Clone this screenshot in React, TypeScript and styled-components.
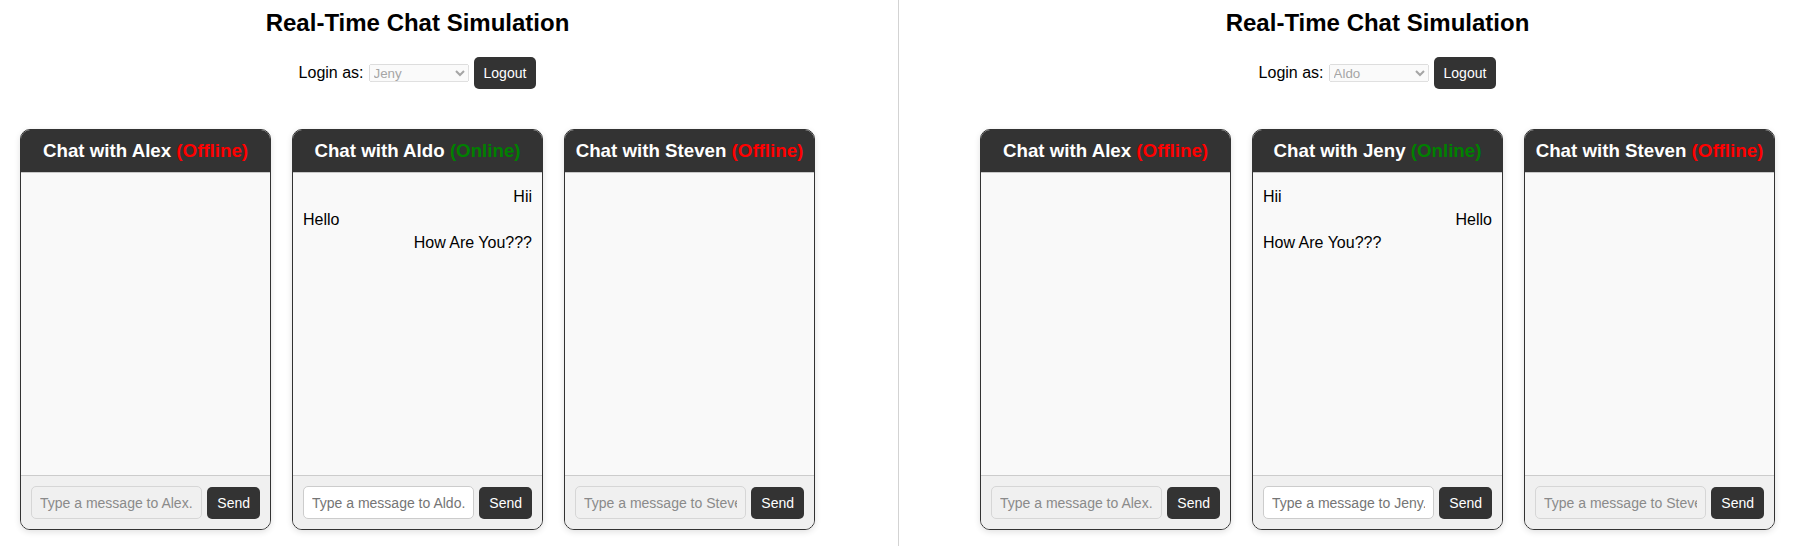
import React from "react";
import styled, { createGlobalStyle } from "styled-components";

const GlobalStyle = createGlobalStyle`
  html, body { margin: 0; padding: 0; background: #ffffff; }
  body { font-family: Arial, "Liberation Sans", sans-serif; color: #000; }
`;

const Page = styled.div`
  display: flex;
  height: 546px;
  width: 1795px;
`;

const Pane = styled.section<{ $side: "left" | "right" }>`
  box-sizing: border-box;
  height: 100%;
  padding-top: 9px;
  ${(p) =>
    p.$side === "left"
      ? `width: 899px; padding-right: 63px; border-right: 1px solid #d3d3d3;`
      : `flex: 1; padding-left: 61px;`}
  display: flex;
  flex-direction: column;
  align-items: stretch;
`;

const Title = styled.h2`
  margin: 0;
  font-size: 24px;
  font-weight: bold;
  text-align: center;
  line-height: normal;
`;

const LoginRow = styled.div`
  margin-top: 20px;
  display: flex;
  justify-content: center;
  align-items: center;
  gap: 5px;
  font-size: 16px;
`;

const UserSelect = styled.select`
  width: 100px;
  height: 18px;
  font-family: Arial, "Liberation Sans", sans-serif;
  font-size: 13.33px;
`;

const DarkButton = styled.button`
  background: #333333;
  color: #ffffff;
  border: none;
  border-radius: 5px;
  padding: 8px 10px;
  font-family: Arial, "Liberation Sans", sans-serif;
  font-size: 14px;
  line-height: 16px;
  cursor: pointer;
  white-space: nowrap;
`;

const CardRow = styled.div`
  margin-top: 40px;
  display: flex;
  justify-content: center;
  gap: 21px;
`;

const Card = styled.div`
  box-sizing: border-box;
  width: 251px;
  height: 401px;
  border: 1px solid #333333;
  border-radius: 10px;
  overflow: hidden;
  display: flex;
  flex-direction: column;
  background: #f9f9f9;
  box-shadow: 0 2px 6px rgba(0, 0, 0, 0.12);
`;

const CardHeader = styled.h3`
  margin: 0;
  padding: 10px;
  background: #333333;
  color: #ffffff;
  font-size: 18.72px;
  font-weight: bold;
  text-align: center;
  white-space: nowrap;
  border-bottom: 1px solid #c8c8c8;
`;

const Status = styled.span<{ $online: boolean }>`
  color: ${(p) => (p.$online ? "#008000" : "#ff0000")};
`;

const Messages = styled.div`
  flex: 1;
  padding: 10px;
  overflow-y: auto;
`;

const Message = styled.div<{ $mine: boolean }>`
  margin: 5px 0;
  font-size: 16px;
  text-align: ${(p) => (p.$mine ? "right" : "left")};
`;

const Footer = styled.div`
  display: flex;
  align-items: center;
  gap: 5px;
  padding: 10px;
  border-top: 1px solid #cccccc;
  background: #f0f0f0;
`;

const MessageInput = styled.input`
  flex: 1;
  min-width: 0;
  box-sizing: border-box;
  height: 33px;
  padding: 8px;
  border: 1px solid #cccccc;
  border-radius: 5px;
  font-family: Arial, "Liberation Sans", sans-serif;
  font-size: 14px;
  background: #ffffff;
  &:disabled {
    background: #f0f0f0;
    border-color: #d6d6d6;
  }
  &::placeholder {
    color: #757575;
  }
  &:disabled::placeholder {
    color: #8a8a8a;
  }
`;

type Msg = { from: string; text: string };

const conversation: Msg[] = [
  { from: "Jeny", text: "Hii" },
  { from: "Aldo", text: "Hello" },
  { from: "Jeny", text: "How Are You???" },
];

const users = ["Jeny", "Aldo", "Alex", "Steven"];
const online = new Set(["Jeny", "Aldo"]);

function ChatCard({ me, other }: { me: string; other: string }) {
  const isOnline = online.has(other);
  const pair = [me, other];
  const msgs = pair.includes("Jeny") && pair.includes("Aldo") ? conversation : [];
  return (
    <Card>
      <CardHeader>
        Chat with {other} <Status $online={isOnline}>({isOnline ? "Online" : "Offline"})</Status>
      </CardHeader>
      <Messages>
        {msgs.map((m, i) => (
          <Message key={i} $mine={m.from === me}>
            {m.text}
          </Message>
        ))}
      </Messages>
      <Footer>
        <MessageInput placeholder={`Type a message to ${other}...`} disabled={!isOnline} />
        <DarkButton>Send</DarkButton>
      </Footer>
    </Card>
  );
}

function ChatWindow({ me, side }: { me: string; side: "left" | "right" }) {
  const others = ["Alex", me === "Jeny" ? "Aldo" : "Jeny", "Steven"];
  return (
    <Pane $side={side}>
      <Title>Real-Time Chat Simulation</Title>
      <LoginRow>
        <span>Login as:</span>
        <UserSelect disabled value={me} onChange={() => {}}>
          {users.map((u) => (
            <option key={u} value={u}>
              {u}
            </option>
          ))}
        </UserSelect>
        <DarkButton>Logout</DarkButton>
      </LoginRow>
      <CardRow>
        {others.map((o) => (
          <ChatCard key={o} me={me} other={o} />
        ))}
      </CardRow>
    </Pane>
  );
}

export default function App() {
  return (
    <>
      <GlobalStyle />
      <Page>
        <ChatWindow me="Jeny" side="left" />
        <ChatWindow me="Aldo" side="right" />
      </Page>
    </>
  );
}
